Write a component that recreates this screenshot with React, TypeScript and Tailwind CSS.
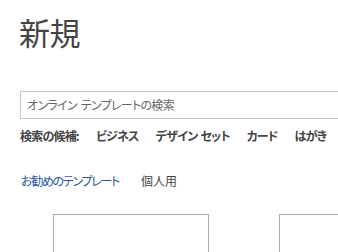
import React from 'react';

const suggestions = [['ビジネス'], ['デザイン', 'セット'], ['カード'], ['はがき']];

export default function App() {
  return (
    <div
      className="w-[338px] h-[252px] overflow-hidden bg-white text-[#444] [font-feature-settings:'palt']"
      style={{ fontFamily: '"Noto Sans CJK JP", "Noto Sans", sans-serif' }}
    >
      <h1 className="pl-[19px] pt-[13px] text-[31px] leading-[38px] font-normal text-[#444] tracking-[-0.5px]">新規</h1>

      <div className="ml-[20px] mt-[40px] w-[330px] h-[28px] border border-[#c6c6c6] flex items-center pl-[6px]">
        <span className="text-[12px] text-[#666] whitespace-nowrap tracking-[-0.7px] flex gap-[4px]">
          <span>オンライン</span>
          <span>テンプレートの検索</span>
        </span>
      </div>

      <div className="ml-[20px] mt-[8px] h-[18px] flex items-center text-[12px] font-bold text-[#444] whitespace-nowrap tracking-[-0.8px]">
        <span className="mr-[17px]">検索の候補:</span>
        <div className="flex gap-[17px]">
          {suggestions.map((parts) => (
            <span key={parts.join('')} className="flex gap-[3px]">
              {parts.map((p) => (
                <span key={p}>{p}</span>
              ))}
            </span>
          ))}
        </div>
      </div>

      <div className="ml-[21px] mt-[27px] h-[18px] flex items-center gap-[22px] text-[12px] whitespace-nowrap">
        <span className="text-[#2b579a] tracking-[-1.3px]">お勧めのテンプレート</span>
        <span className="text-[#444]">個人用</span>
      </div>

      <div className="ml-[53px] mt-[24px] flex gap-[70px]">
        <div className="w-[156px] h-[80px] shrink-0 border border-[#ababab]" />
        <div className="w-[156px] h-[80px] shrink-0 border border-[#ababab]" />
      </div>
    </div>
  );
}
